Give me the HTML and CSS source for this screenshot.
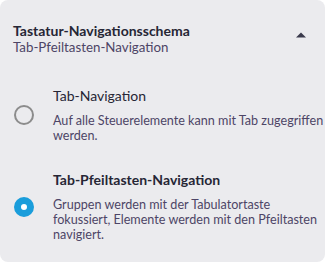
FILE: index.html
```html
<!DOCTYPE html>
<html>
  <head>
    <title>Tastatur-Navigationsschema</title>
    <meta name="viewport" content="width=device-width, initial-scale=1.0" />
    <link rel="stylesheet" href="styles.css">
  </head>
  <body>
    <div class="card">
      <div class="header">
        <div>
          <div class="title">Tastatur-Navigationsschema</div>
          <div class="subtitle">Tab-Pfeiltasten-Navigation</div>
        </div>
        <svg class="chevron" width="12" height="7" viewBox="0 0 12 7">
          <path d="M1 6.5 L6 1.5 L11 6.5 Z" fill="#3a3a4c" />
        </svg>
      </div>
      <div class="options">
        <label class="option">
          <span class="radio"></span>
          <span class="text">
            <span class="name">Tab-Navigation</span>
            <span class="desc">Auf alle Steuerelemente kann mit Tab zugegriffen werden.</span>
          </span>
        </label>
        <label class="option checked">
          <span class="radio"></span>
          <span class="text">
            <span class="name">Tab-Pfeiltasten-Navigation</span>
            <span class="desc">Gruppen werden mit der Tabulatortaste fokussiert, Elemente werden mit den Pfeiltasten navigiert.</span>
          </span>
        </label>
      </div>
    </div>
  </body>
</html>
```

FILE: styles.css
```css
body {
  margin: 0;
  background: white;
  font-family: Lato, "Noto Sans", sans-serif;
}

.card {
  width: 325px;
  height: 262px;
  background-color: #ebebee;
  border-radius: 8px;
  box-sizing: border-box;
}

.header {
  display: flex;
  align-items: center;
  justify-content: space-between;
  padding: 22px 18px 0 13px;
}

.title {
  font-size: 14px;
  font-weight: 700;
  color: #262635;
  line-height: 18px;
}

.subtitle {
  font-size: 13.3px;
  color: #4d4566;
  line-height: 15px;
}

.chevron {
  margin-top: -8px;
}

.options {
  padding: 32px 0 0 14px;
}

.option {
  display: flex;
  align-items: center;
  gap: 19px;
  margin-bottom: 28px;
}

.radio {
  flex: none;
  width: 20px;
  height: 20px;
  box-sizing: border-box;
  border: 2px solid #8c8c8c;
  border-radius: 50%;
}

.option.checked .radio {
  border: 7px solid #1a9ddb;
  background: white;
}

.text {
  flex: 1;
  min-width: 0;
  display: flex;
  flex-direction: column;
}

.name {
  font-size: 14px;
  color: #262635;
  line-height: 18px;
  margin-bottom: 8px;
}

.option.checked .name {
  font-weight: 700;
}

.desc {
  font-size: 12.6px;
  color: #4d4566;
  line-height: 15px;
}
```
